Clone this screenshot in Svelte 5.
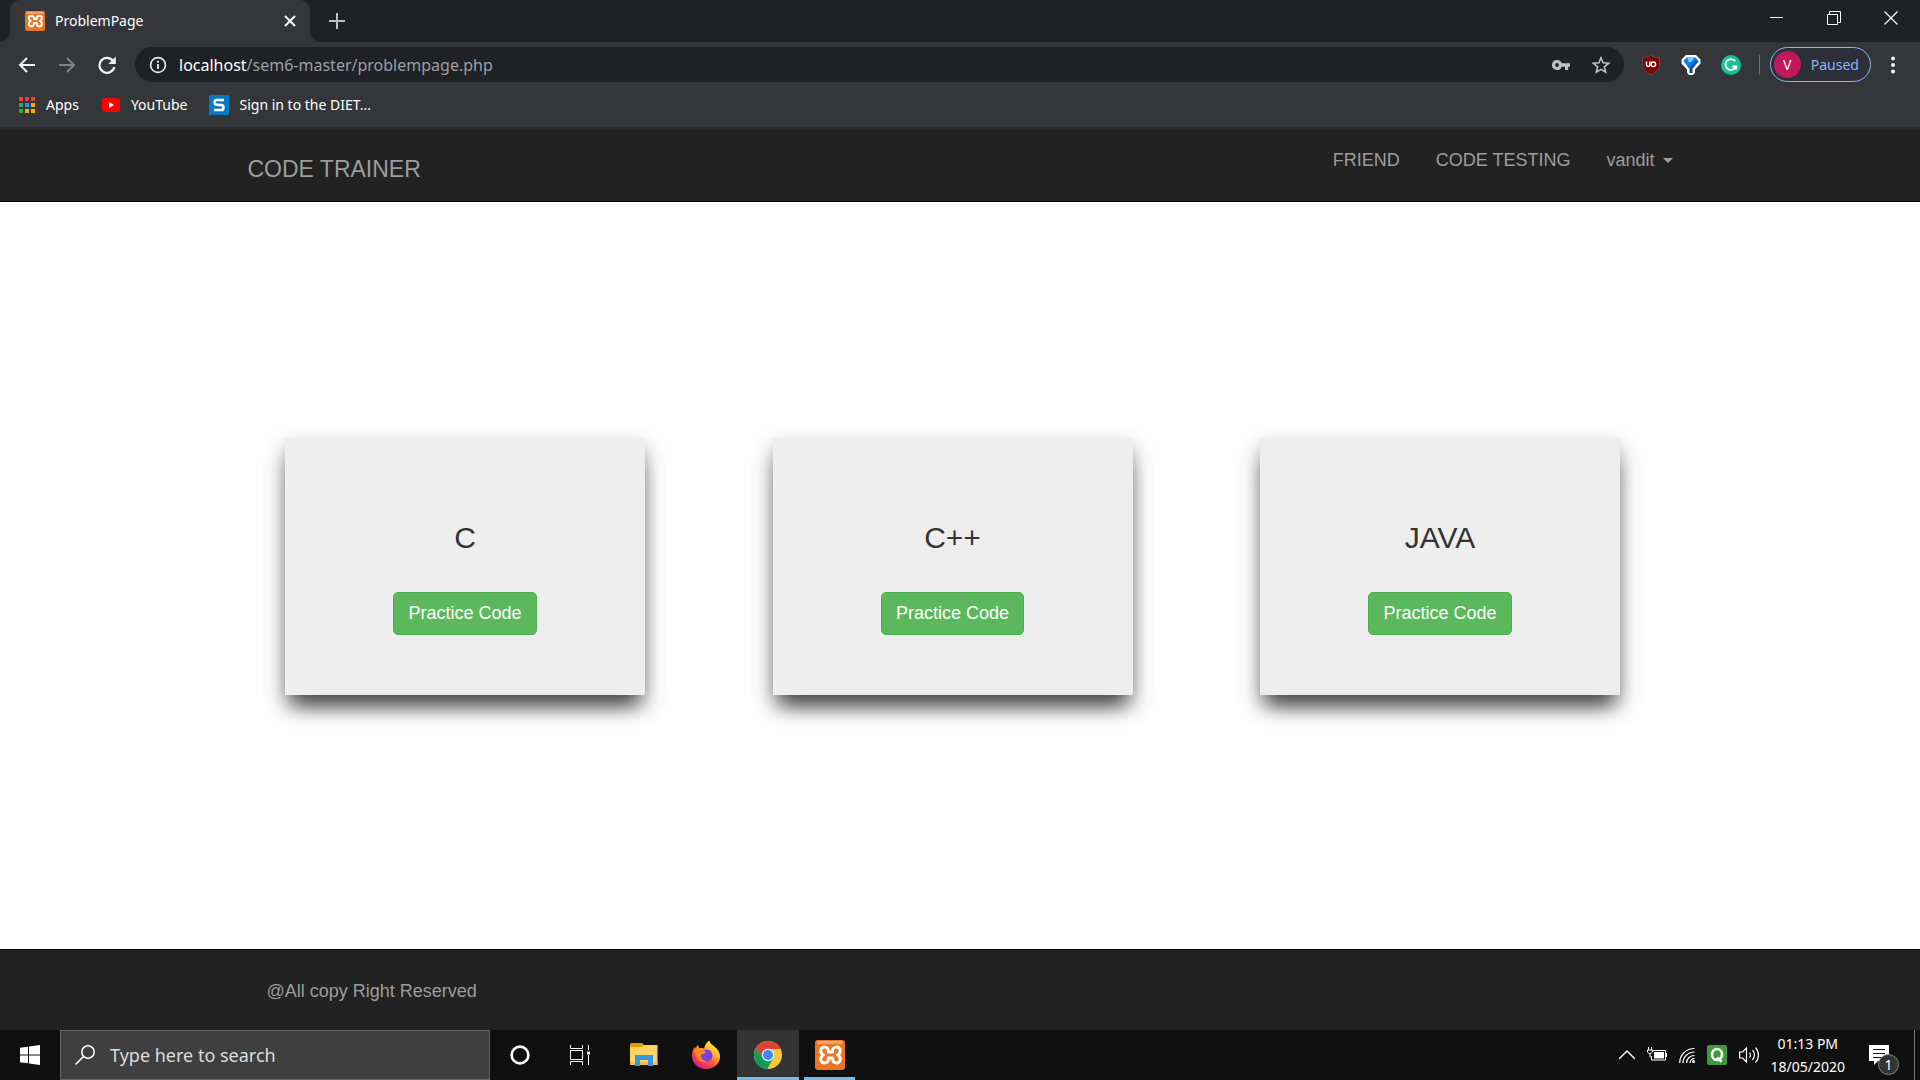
<script>
  const languages = ['C', 'C++', 'JAVA'];
  let search = $state('');
</script>

{#snippet xampp()}
  <rect width="30" height="30" rx="3" fill="#ec7422" />
  <rect x="2" y="1" width="26" height="3" rx="1" fill="#f3a56b" />
  <path
    d="M13.300 12C14.500 6 6 5.500 5.700 10.500c0 2 .8 3.500 2.800 4.500-2 1-2.800 2.500-2.800 4.500.3 5 8.800 4.500 7.600-1.500h4.400c-1.200 6 7.300 6.500 7.600 1.500 0-2-.8-3.500-2.800-4.500 2-1 2.800-2.500 2.800-4.500-.3-5-8.800-4.500-7.600 1.500z"
    fill="none"
    stroke="#fff"
    stroke-width="3"
    stroke-linecap="round"
    stroke-linejoin="round"
  />
{/snippet}

<div class="screen">
  <header class="browser">
    <div class="tabs">
      <div class="tab">
        <svg class="i20" viewBox="0 0 30 30" aria-hidden="true">{@render xampp()}</svg>
        <span class="tab-title">ProblemPage</span>
        <button class="plain" aria-label="Close tab">
          <svg class="i12" viewBox="0 0 12 12" aria-hidden="true"><path d="M1 1l10 10M11 1L1 11" stroke="#fff" stroke-width="2" /></svg>
        </button>
        <svg class="flare left" viewBox="0 0 10 10" aria-hidden="true"><path d="M10 0v10H0A10 10 0 0 0 10 0z" fill="#35363a" /></svg>
        <svg class="flare right" viewBox="0 0 10 10" aria-hidden="true"><path d="M0 0v10h10A10 10 0 0 1 0 0z" fill="#35363a" /></svg>
      </div>
      <button class="plain new-tab" aria-label="New tab">
        <svg class="i16" viewBox="0 0 16 16" aria-hidden="true"><path d="M8 0v16M0 8h16" stroke="#bdc1c6" stroke-width="2" /></svg>
      </button>
      <div class="window-buttons">
        <button class="plain" aria-label="Minimize">
          <svg class="i14" viewBox="0 0 14 14" aria-hidden="true"><path d="M0 6.500h13" stroke="#fff" /></svg>
        </button>
        <button class="plain" aria-label="Restore">
          <svg class="i14" viewBox="0 0 14 14" fill="none" stroke="#fff" aria-hidden="true"><path d="M.5 3.500h10v10H.5zM2.500 3V.5h11v11H11" /></svg>
        </button>
        <button class="plain" aria-label="Close">
          <svg class="i14" viewBox="0 0 14 14" aria-hidden="true"><path d="M.5.5l13 13M13.500.5l-13 13" stroke="#fff" stroke-width="1.200" /></svg>
        </button>
      </div>
    </div>

    <div class="toolbar">
      <button class="plain" aria-label="Back">
        <svg class="i18" viewBox="0 0 18 18" fill="none" stroke="#f1f3f4" stroke-width="2" aria-hidden="true"><path d="M17 9H2M9 2L2 9l7 7" /></svg>
      </button>
      <button class="plain" aria-label="Forward">
        <svg class="i18" viewBox="0 0 18 18" fill="none" stroke="#818286" stroke-width="2" aria-hidden="true"><path d="M1 9h15M9 2l7 7-7 7" /></svg>
      </button>
      <button class="plain" aria-label="Reload">
        <svg class="i18" viewBox="0 0 18 18" aria-hidden="true">
          <path d="M15 4.800A7.500 7.500 0 1 0 16.300 11" fill="none" stroke="#f1f3f4" stroke-width="2.200" />
          <path d="M17.800.6v7.400h-7.400z" fill="#f1f3f4" />
        </svg>
      </button>
      <div class="address">
        <svg class="i18" viewBox="0 0 18 18" aria-hidden="true">
          <circle cx="9" cy="9" r="7.400" fill="none" stroke="#e8eaed" stroke-width="1.700" />
          <path d="M9 8v5M9 4.800v1.900" stroke="#e8eaed" stroke-width="1.800" />
        </svg>
        <a class="url" href="#top"><span class="host">localhost</span>/sem6-master/problempage.php</a>
        <button class="plain" aria-label="Saved passwords">
          <svg class="i18" viewBox="0 0 18 18" fill="#bdc1c6" aria-hidden="true">
            <path fill-rule="evenodd" d="M5 4a5 5 0 1 0 4.700 6.700H13V14h3.200v-3.300H18V7.300H9.700A5 5 0 0 0 5 4zm0 3.100a1.900 1.900 0 1 1 0 3.800 1.900 1.900 0 0 1 0-3.800z" />
          </svg>
        </button>
        <button class="plain" aria-label="Bookmark this page">
          <svg class="i18" viewBox="0 0 18 18" fill="none" stroke="#bdc1c6" stroke-width="1.600" aria-hidden="true">
            <path d="M9 1.800l2.100 5 5.500.5-4.200 3.600 1.300 5.300L9 13.400l-4.700 2.800 1.300-5.300L1.400 7.300l5.500-.5z" />
          </svg>
        </button>
      </div>
      <button class="plain" aria-label="Ad blocker">
        <svg class="i20" viewBox="0 0 20 20" aria-hidden="true">
          <path d="M10 .5c2.500 1.500 5 2 8.500 2V10c0 4-3.500 7-8.500 9.500C5 17 1.500 14 1.500 10V2.500c3.500 0 6-.5 8.500-2z" fill="#800000" stroke="#5c4a4c" />
          <path d="M5.500 6.500v3.300a1.700 1.700 0 0 0 3.400 0V6.500" fill="none" stroke="#fff" stroke-width="1.500" />
          <circle cx="12.300" cy="9.200" r="2.300" fill="none" stroke="#fff" stroke-width="1.500" />
        </svg>
      </button>
      <button class="plain" aria-label="VPN">
        <svg class="i20" viewBox="0 0 20 20" aria-hidden="true">
          <path d="M5 0h10l4.500 4.500v4L14 14.500v3L12 20H8l-2-2.500v-3L.5 8.500v-4z" fill="#fff" />
          <path d="M5.500 2.500h9l3 3.500-5 7h-5L2.500 6z" fill="#087ee0" />
          <path d="M6 3h7l-2 3.500-3 1z" fill="#78c9fa" />
          <path d="M17.500 6l-6 7H9l5-7z" fill="#0747ad" />
          <path d="M8.500 13h3v5h-3z" fill="#174073" />
        </svg>
      </button>
      <button class="plain" aria-label="Writing assistant">
        <svg class="i20" viewBox="0 0 20 20" aria-hidden="true">
          <circle cx="10" cy="10" r="10" fill="#15c39a" />
          <path d="M14.200 6.200A5.400 5.400 0 1 0 15 11.500h-3.700M15.200 10.500v4" fill="none" stroke="#fff" stroke-width="1.900" />
        </svg>
      </button>
      <span class="divider"></span>
      <button class="profile"><span class="avatar">V</span>Paused</button>
      <button class="plain menu" aria-label="Browser menu">
        <svg class="i18" viewBox="0 0 18 18" fill="#f1f3f4" aria-hidden="true"><circle cx="9" cy="2.500" r="2" /><circle cx="9" cy="9" r="2" /><circle cx="9" cy="15.500" r="2" /></svg>
      </button>
    </div>

    <nav class="bookmarks" aria-label="Bookmarks">
      <a href="#apps">
        <svg class="i18" viewBox="0 0 18 18" aria-hidden="true">
          <path d="M1 1h4v4H1zM7 1h4v4H7zM13 1h4v4h-4z" fill="#ea4335" />
          <path d="M1 7h4v4H1zM1 13h4v4H1z" fill="#34a853" />
          <path d="M7 7h4v4H7z" fill="#2196f3" />
          <path d="M13 7h4v4h-4zM7 13h4v4H7zM13 13h4v4h-4z" fill="#fbaa05" />
        </svg>
        Apps
      </a>
      <a href="#youtube">
        <svg class="i20" viewBox="0 0 20 20" aria-hidden="true"><rect x="1" y="3" width="18" height="14" rx="3" fill="#f00" /><path d="M8 7l5 3-5 3z" fill="#fff" /></svg>
        YouTube
      </a>
      <a href="#signin">
        <svg class="i20" viewBox="0 0 20 20" aria-hidden="true"><path d="M0 0h20v20H0z" fill="#0678c8" /><path d="M15 5H7.500C5 5 5 9.500 7.500 9.700l5 .4c2.500.2 2.500 4.900 0 4.900H5" fill="none" stroke="#fff" stroke-width="2.600" /></svg>
        Sign in to the DIET...
      </a>
    </nav>
  </header>

  <div class="site-nav">
    <nav class="container" aria-label="Site">
      <a class="brand" href="#home">CODE TRAINER</a>
      <div class="links">
        <a href="#friend">FRIEND</a>
        <a href="#testing">CODE TESTING</a>
        <button class="plain user">vandit <span class="caret"></span></button>
      </div>
    </nav>
  </div>

  <main>
    {#each languages as language}
      <section class="card">
        <h3>{language}</h3>
        <button class="practice">Practice Code</button>
      </section>
    {/each}
  </main>

  <footer><div class="container">@All copy Right Reserved</div></footer>

  <div class="taskbar">
    <button class="plain start" aria-label="Start">
      <svg class="i20" viewBox="0 0 20 20" fill="#fff" aria-hidden="true"><path d="M0 2.800l8-1.100v7.800H0zM9 1.500L20 0v9.500H9zM0 10.500h8v7.800l-8-1.100zM9 10.500h11V20L9 18.500z" /></svg>
    </button>
    <label class="search">
      <svg class="i20" viewBox="0 0 20 20" fill="none" stroke="#fff" stroke-width="1.500" aria-hidden="true"><circle cx="13" cy="7" r="6.200" /><path d="M8.600 11.400L.5 19.500" /></svg>
      <input type="text" placeholder="Type here to search" aria-label="Search" bind:value={search} />
    </label>
    <button class="plain app slim" aria-label="Cortana">
      <svg class="i20" viewBox="0 0 20 20" aria-hidden="true"><circle cx="10" cy="10" r="8.400" fill="none" stroke="#fff" stroke-width="2.600" /></svg>
    </button>
    <button class="plain app slim" aria-label="Task view">
      <svg class="i20" viewBox="0 0 20 20" fill="none" stroke="#fff" aria-hidden="true"><path d="M.5 5.500h12v9H.5zM.5 0v3.500h12V0M.5 20v-3.500h12V20M18.500 0v5M18.500 10v10" /><path d="M17 6.500h3v3h-3z" fill="#fff" stroke="none" /></svg>
    </button>
    <button class="plain app explorer" aria-label="File Explorer">
      <svg class="i30" viewBox="0 0 30 30" aria-hidden="true">
        <path d="M1 4.500L2 3h11l2 2v4H1z" fill="#dea000" />
        <path d="M1 7h12l2-2h13.500v20H1z" fill="#ffd463" />
        <path d="M1 22h27.500v3H1z" fill="#f5bf45" />
        <path d="M6 26V15h18v11h-5v-6h-8v6z" fill="#3a96dd" />
      </svg>
    </button>
    <button class="plain app" aria-label="Firefox">
      <svg class="i30" viewBox="0 0 30 30" aria-hidden="true">
        <defs>
          <linearGradient id="fox" x1=".85" y1=".05" x2=".25" y2=".95"><stop offset="0" stop-color="#fff44f" /><stop offset=".35" stop-color="#ffb52e" /><stop offset=".62" stop-color="#ff5b3a" /><stop offset="1" stop-color="#e31587" /></linearGradient>
        </defs>
        <path d="M18 .5c1 3 4 5 6 6.500 3 2.300 5 6 5 9.500 0 7.500-6 12.500-14 12.500S1 23 1 16c0-4 1-7 3-9.500l.5 2L7 4.500l1 3.500c2 0 4-.5 5 .5 1-4 3-6.500 5-8z" fill="url(#fox)" />
        <circle cx="15.500" cy="15.500" r="6" fill="#7542e5" />
        <path d="M3 11c3-3 6-3 9-1l3 2c-1 2-4 1.500-5 3-1 3 2 6 6 6-5 3-11-1-11-6z" fill="#ff8a1f" />
      </svg>
    </button>
    <button class="plain app active" aria-label="Chrome">
      <svg class="i30" viewBox="0 0 30 30" aria-hidden="true">
        <circle cx="15" cy="15" r="14" fill="#fbc73c" />
        <path d="M2.900 8A14 14 0 0 1 27.600 9H15l-5.200 9z" fill="#db4437" />
        <path d="M2.900 8A14 14 0 0 0 14.300 29l6-11-10.500 0z" fill="#0f9d58" />
        <circle cx="15" cy="15" r="6.200" fill="#f1f1f1" />
        <circle cx="15" cy="15" r="5" fill="#4285f4" />
      </svg>
    </button>
    <button class="plain app running" aria-label="XAMPP">
      <svg class="i30" viewBox="0 0 30 30" aria-hidden="true">{@render xampp()}</svg>
    </button>
    <div class="tray">
      <button class="plain" aria-label="Show hidden icons">
        <svg class="i16" viewBox="0 0 16 16" fill="none" stroke="#fff" stroke-width="1.400" aria-hidden="true"><path d="M0 12l8-8 8 8" /></svg>
      </button>
      <button class="plain" aria-label="Battery">
        <svg class="i20" viewBox="0 0 20 20" fill="none" stroke="#fff" aria-hidden="true"><path d="M6 5.500h12.500v9.500H4.500V11" /><path d="M7 7h10v6.500H7zM19 8h1v4h-1z" fill="#fff" stroke="none" /><path d="M1.500 2v3M4.500 2v3M.5 5h5v2L4 8.500H2L.5 7zM3 8.500v4" /></svg>
      </button>
      <button class="plain" aria-label="Network">
        <svg class="i16" viewBox="0 0 16 16" fill="none" stroke="#fff" stroke-width="1.200" aria-hidden="true"><path d="M.7 16C.7 8 7 1.500 15.500 1.500M4 16c0-6 5-11 11.500-11M7.500 16c0-4 3.500-7.500 8-7.500M11 16c0-2.500 2-4.300 4.500-4.300" /><circle cx="14.500" cy="14.500" r="1.500" fill="#fff" stroke="none" /></svg>
      </button>
      <button class="plain" aria-label="Quick Heal">
        <svg class="i20" viewBox="0 0 20 20" aria-hidden="true"><rect width="20" height="20" rx="2" fill="#3d9b3c" /><ellipse cx="10" cy="9.500" rx="5" ry="5.500" fill="none" stroke="#fff" stroke-width="2.600" /><path d="M10 12.500l4.500 4.300" stroke="#fff" stroke-width="2.600" /></svg>
      </button>
      <button class="plain" aria-label="Volume">
        <svg class="i20" viewBox="0 0 20 20" fill="none" stroke="#fff" stroke-width="1.200" aria-hidden="true"><path d="M.6 7h3L7.500 3v14l-3.900-4h-3zM10.500 7.500a4 4 0 0 1 0 5M13.500 5a7.500 7.500 0 0 1 0 10M16.500 2.500a11 11 0 0 1 0 15" /></svg>
      </button>
      <div class="clock"><time>01:13 PM</time><time>18/05/2020</time></div>
      <button class="plain notes" aria-label="Notifications">
        <svg class="i20" viewBox="0 0 20 20" aria-hidden="true"><path d="M0 0h20v16H9l-4 4v-4H0z" fill="#fff" /><path d="M4 4.500h12M4 8.500h12M4 12.500h9" stroke="#111" /></svg>
        <span class="badge">1</span>
      </button>
    </div>
  </div>
</div>

<style>
  :global(body) { margin: 0; }
  * { box-sizing: border-box; }
  svg { display: block; flex: none; }
  a { color: inherit; text-decoration: none; }
  .screen {
    display: flex;
    flex-direction: column;
    min-height: 100vh;
    background: #fff;
    font-family: 'Noto Sans', 'Open Sans', sans-serif;
    font-size: 14px;
  }
  .plain {
    display: flex;
    align-items: center;
    justify-content: center;
    padding: 0;
    border: 0;
    background: none;
    color: inherit;
    font: inherit;
  }
  .i12 { width: 12px; height: 12px; }
  .i14 { width: 14px; height: 14px; }
  .i16 { width: 16px; height: 16px; }
  .i18 { width: 18px; height: 18px; }
  .i20 { width: 20px; height: 20px; }
  .i30 { width: 30px; height: 30px; }

  .browser { background: #35363a; color: #fff; border-bottom: 2px solid #28292b; }
  .tabs { display: flex; align-items: center; height: 42px; padding-left: 10px; background: #202124; }
  .tab {
    position: relative;
    display: flex;
    align-items: center;
    gap: 10px;
    width: 300px;
    height: 42px;
    padding: 0 14px 0 15px;
    border-radius: 10px 10px 0 0;
    background: #35363a;
  }
  .tab-title { flex: 1; padding-bottom: 2px; }
  .flare { position: absolute; bottom: 0; width: 10px; height: 10px; }
  .left { right: 100%; }
  .right { left: 100%; }
  .new-tab { margin-left: 19px; }
  .window-buttons { display: flex; gap: 43px; margin: 0 22px 6px auto; }

  .toolbar { display: flex; align-items: center; gap: 20px; height: 45px; padding: 0 18px; }
  .toolbar > .plain:nth-child(-n + 2) { margin-right: 2px; }
  .address {
    display: flex;
    flex: 1;
    align-items: center;
    gap: 22px;
    height: 35px;
    margin: 0 -3px 0 -1px;
    padding: 0 14px;
    border-radius: 18px;
    background: #202124;
  }
  .url { flex: 1; margin-left: -10px; color: #9aa0a6; font-size: 16px; }
  .host { color: #fff; }
  .divider { width: 1px; height: 20px; margin-left: -2px; background: #6b6c70; }
  .profile {
    display: flex;
    align-items: center;
    gap: 10px;
    height: 35px;
    margin-left: -10px;
    padding: 0 11px 0 3px;
    border: 1px solid #8ab4f8;
    border-radius: 18px;
    background: #2d3039;
    color: #8ab4f8;
    font: inherit;
  }
  .avatar {
    width: 27px;
    height: 27px;
    border-radius: 50%;
    background: #c2185b;
    color: #fff;
    line-height: 27px;
    text-align: center;
  }
  .menu { margin-left: -7px; }
  .bookmarks { display: flex; gap: 22px; height: 40px; padding: 0 18px 5px; }
  .bookmarks a { display: flex; align-items: center; gap: 10px; }

  .site-nav,
  footer {
    background: #222;
    color: #9d9d9d;
    font: 18px/25px 'Liberation Sans', Arial, sans-serif;
  }
  .site-nav { border-bottom: 1px solid #080808; }
  .container { width: 76%; max-width: 1462px; margin: 0 auto; padding: 0 17px; }
  .site-nav .container { display: flex; justify-content: space-between; height: 72px; }
  .brand { padding-top: 28px; font-size: 23px; }
  .links { display: flex; align-items: flex-start; gap: 36px; padding-top: 19px; }
  .user { gap: 8px; }
  .caret { border: 5px solid transparent; border-top-color: currentColor; border-bottom: 0; }

  main {
    display: flex;
    flex: 1;
    align-items: center;
    justify-content: space-between;
    gap: 40px;
    padding: 0 300px 19px 285px;
    font-family: 'Liberation Sans', Arial, sans-serif;
  }
  .card {
    display: flex;
    flex: 0 1 360px;
    flex-direction: column;
    align-items: center;
    padding: 83px 20px 60px;
    background: #eee;
    box-shadow: 0 18px 20px -8px rgba(0, 0, 0, 0.6), 0 10px 20px rgba(0, 0, 0, 0.38);
  }
  h3 { margin: 0 0 38px; color: #333; font-size: 30px; font-weight: 400; line-height: 33px; }
  .practice {
    padding: 8px 14px;
    border: 1px solid #4cae4c;
    border-radius: 5px;
    background: #5cb85c;
    color: #fff;
    font: 18px/25px 'Liberation Sans', Arial, sans-serif;
  }
  footer { border-top: 1px solid #080808; }
  footer .container { padding: 29px 36px 26px; }

  .taskbar { display: flex; height: 50px; background: #101010; color: #fff; }
  .start { width: 60px; }
  .search {
    display: flex;
    align-items: center;
    gap: 15px;
    width: 430px;
    padding: 0 14px;
    border: 1px solid #666;
    background: #3f3f3f;
  }
  .search input { flex: 1; min-width: 0; padding: 0; border: 0; outline: 0; background: none; color: #fff; font: inherit; font-size: 18px; }
  .search input::placeholder { color: #dcdcdc; opacity: 1; }
  .app { width: 62px; }
  .slim { width: 60px; }
  .explorer { margin-left: 3px; }
  .active { border-bottom: 3px solid #76b9ed; border-top: 3px solid #333; background: #333; }
  .running { width: 51px; margin-left: 5px; border-bottom: 3px solid #76b9ed; border-top: 3px solid transparent; }
  .tray { display: flex; align-items: center; gap: 12px; margin-left: auto; padding-right: 5px; }
  .clock { display: flex; flex-direction: column; align-items: center; line-height: 23px; }
  .notes { position: relative; width: 58px; height: 50px; padding-right: 14px; border-right: 1px solid #777; }
  .badge {
    position: absolute;
    right: 15px;
    bottom: 5px;
    width: 21px;
    height: 21px;
    border: 1px solid #888;
    border-radius: 50%;
    background: #333;
    line-height: 19px;
  }
</style>
